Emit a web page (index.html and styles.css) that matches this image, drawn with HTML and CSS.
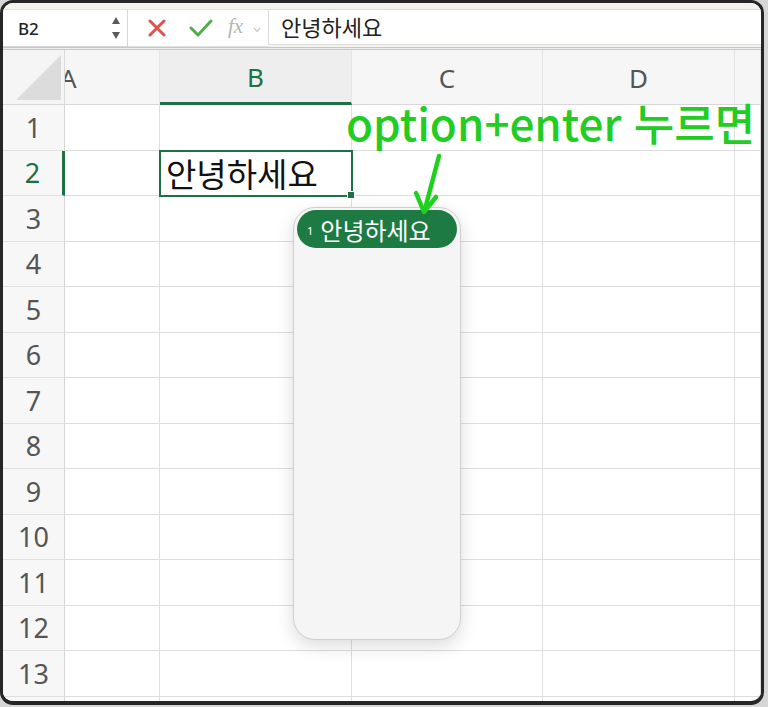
FILE: index.html
```html
<!DOCTYPE html>
<html lang="ko">
<head>
<meta charset="utf-8">
<title>Sheet</title>
<link rel="stylesheet" href="styles.css">
</head>
<body>
<div class="window">
  <div class="fbar">
    <div class="namebox">
      <span class="ref">B2</span>
      <svg class="stepper" width="10" height="24" viewBox="0 0 10 24"><path d="M5 1 L9 8 L1 8 Z" fill="#5a5a5a"/><path d="M1 16 L9 16 L5 23 Z" fill="#5a5a5a"/></svg>
    </div>
    <div class="actions">
      <svg class="ico-x" width="18" height="18" viewBox="0 0 18 18"><path d="M2 2 L16 16 M16 2 L2 16" stroke="#d9534f" stroke-width="3" stroke-linecap="round"/></svg>
      <svg class="ico-ok" width="24" height="18" viewBox="0 0 24 18"><path d="M2 9 L9 16 L22 2" stroke="#4cae4c" stroke-width="3" fill="none" stroke-linecap="round" stroke-linejoin="round"/></svg>
      <span class="fx">fx</span>
      <svg class="chev" width="8" height="6" viewBox="0 0 8 6"><path d="M1 1 L4 4.5 L7 1" stroke="#c8c8c8" stroke-width="1.2" fill="none"/></svg>
    </div>
    <div class="finput">안녕하세요</div>
  </div>
  <div class="sep"></div>
  <div class="sheet">
    <div class="corner"><svg width="46" height="46" viewBox="0 0 46 46"><path d="M0 45 L45 0 L45 45 Z" fill="#dcdcdc"/></svg></div>
    <div class="ch ch-a">A</div>
    <div class="ch ch-sel">B</div>
    <div class="ch">C</div>
    <div class="ch">D</div>
    <div class="ch"></div>

    <div class="rh">1</div><div class="c"></div><div class="c"></div><div class="c"></div><div class="c"></div><div class="c"></div>
    <div class="rh rh-sel">2</div><div class="c"></div><div class="c active">안녕하세요<span class="handle"></span></div><div class="c"></div><div class="c"></div><div class="c"></div>
    <div class="rh">3</div><div class="c"></div><div class="c"></div><div class="c"></div><div class="c"></div><div class="c"></div>
    <div class="rh">4</div><div class="c"></div><div class="c"></div><div class="c"></div><div class="c"></div><div class="c"></div>
    <div class="rh">5</div><div class="c"></div><div class="c"></div><div class="c"></div><div class="c"></div><div class="c"></div>
    <div class="rh">6</div><div class="c"></div><div class="c"></div><div class="c"></div><div class="c"></div><div class="c"></div>
    <div class="rh">7</div><div class="c"></div><div class="c"></div><div class="c"></div><div class="c"></div><div class="c"></div>
    <div class="rh">8</div><div class="c"></div><div class="c"></div><div class="c"></div><div class="c"></div><div class="c"></div>
    <div class="rh">9</div><div class="c"></div><div class="c"></div><div class="c"></div><div class="c"></div><div class="c"></div>
    <div class="rh">10</div><div class="c"></div><div class="c"></div><div class="c"></div><div class="c"></div><div class="c"></div>
    <div class="rh">11</div><div class="c"></div><div class="c"></div><div class="c"></div><div class="c"></div><div class="c"></div>
    <div class="rh">12</div><div class="c"></div><div class="c"></div><div class="c"></div><div class="c"></div><div class="c"></div>
    <div class="rh">13</div><div class="c"></div><div class="c"></div><div class="c"></div><div class="c"></div><div class="c"></div>
    <div class="rh"></div><div class="c"></div><div class="c"></div><div class="c"></div><div class="c"></div><div class="c"></div>
  </div>

  <div class="note">option+enter 누르면</div>
  <svg class="arrow" width="40" height="66" viewBox="0 0 40 66"><path d="M29 4 L15 57" stroke="#1fd11f" stroke-width="4.5" fill="none" stroke-linecap="round"/><path d="M6 41 L14 60 L26 45" stroke="#1fd11f" stroke-width="4.5" fill="none" stroke-linecap="round" stroke-linejoin="round"/></svg>

  <div class="dropdown">
    <div class="pill"><span class="num">1</span><span class="pill-text">안녕하세요</span></div>
  </div>
</div>
</body>
</html>
```

FILE: styles.css
```css
html, body {
  margin: 0;
  padding: 0;
}
body {
  background: #d6d6d6;
  width: 768px;
  height: 707px;
  overflow: hidden;
  font-family: "Noto Sans", "Noto Sans CJK KR", sans-serif;
}
.window {
  position: relative;
  box-sizing: border-box;
  width: 764px;
  height: 705px;
  border: 3px solid #262626;
  border-bottom-width: 4px;
  border-radius: 13px;
  overflow: hidden;
  background: #ffffff;
}
.fbar {
  display: flex;
  height: 44px;
  box-sizing: border-box;
  background: #f4f3ee;
  padding-top: 6px;
}
.namebox {
  width: 125px;
  display: flex;
  align-items: center;
  justify-content: space-between;
  box-sizing: border-box;
  background: #fff;
  border-top: 1px solid #e2e2e2;
  border-right: 1px solid #d6d6d6;
  border-bottom: 1px solid #d6d6d6;
  padding: 0 6px 0 15px;
}
.ref {
  font-size: 17px;
  font-weight: 500;
  color: #222;
}
.actions {
  width: 140px;
  display: flex;
  align-items: center;
  background: #fff;
  border-top: 1px solid #e2e2e2;
  border-bottom: 1px solid #e2e2e2;
  box-sizing: border-box;
  padding-left: 20px;
}
.ico-x { margin-right: 23px; }
.ico-ok { margin-right: 15px; }
.fx {
  font-family: "Liberation Serif", "DejaVu Serif", serif;
  font-style: italic;
  font-size: 21px;
  color: #b4b4b4;
  margin-right: 10px;
  margin-top: -3px;
}
.chev { margin-top: 4px; }
.finput {
  flex: 1;
  background: #fff;
  border: 1px solid #dcdcdc;
  border-right: none;
  margin-bottom: 2px;
  box-sizing: border-box;
  padding-left: 12px;
  font-family: "Noto Sans CJK KR", sans-serif;
  font-size: 22px;
  color: #222;
  line-height: 32px;
}
.sep {
  height: 3px;
  box-sizing: border-box;
  border-top: 1px solid #c8c8c8;
  border-bottom: 1px solid #c8c8c8;
  background: #eeeeee;
}
.sheet {
  display: grid;
  grid-template-columns: 62px 95px 192px 191px 192px 1fr;
  grid-template-rows: 55px repeat(14, 45.5px);
}
.corner {
  background: #f5f5f5;
  border-right: 1px solid #dadada;
  border-bottom: 1px solid #d8d8d8;
  box-sizing: border-box;
  display: flex;
  align-items: flex-end;
  justify-content: flex-end;
  padding: 0 2px 3px 0;
}
.ch {
  background: #f6f6f6;
  border-right: 1px solid #e6e6e6;
  border-bottom: 1px solid #d8d8d8;
  box-sizing: border-box;
  display: flex;
  align-items: center;
  justify-content: center;
  font-size: 26px;
  color: #555;
  overflow: hidden;
  padding-top: 2px;
}
.ch-a {
  justify-content: flex-start;
  text-indent: -5px;
}
.ch-sel {
  background: #eeeeee;
  color: #1e7145;
  border-bottom: 3px solid #1e7145;
}
.rh {
  background: #f7f7f7;
  border-right: 1px solid #d6d6d6;
  border-bottom: 1px solid #e0e0e0;
  box-sizing: border-box;
  display: flex;
  align-items: center;
  justify-content: center;
  font-size: 27px;
  color: #555;
}
.rh-sel {
  color: #1e7145;
  border-right: 3px solid #1e7145;
}
.c {
  border-right: 1px solid #dedede;
  border-bottom: 1px solid #dedede;
  box-sizing: border-box;
}
.active {
  position: relative;
  outline: 2px solid #1e7145;
  outline-offset: -1px;
  font-family: "Noto Sans CJK KR", sans-serif;
  font-size: 33px;
  color: #111;
  display: flex;
  align-items: center;
  padding-left: 6px;
  z-index: 1;
}
.handle {
  position: absolute;
  right: -4px;
  bottom: -4px;
  width: 6px;
  height: 6px;
  background: #1e7145;
  border: 1px solid #fff;
}
.note {
  position: absolute;
  left: 343px;
  top: 102px;
  font-family: "Noto Sans CJK KR", "Noto Sans", sans-serif;
  font-weight: 500;
  font-size: 44px;
  line-height: 34px;
  color: #22cc22;
  white-space: nowrap;
  z-index: 3;
}
.arrow {
  position: absolute;
  left: 407px;
  top: 149px;
  z-index: 4;
}
.dropdown {
  position: absolute;
  left: 290px;
  top: 204px;
  width: 168px;
  height: 433px;
  box-sizing: border-box;
  background: #f5f5f5;
  border: 1px solid #cfcfcf;
  border-radius: 22px;
  box-shadow: 0 6px 18px rgba(0, 0, 0, 0.14);
  padding: 2px 3px;
  z-index: 2;
}
.pill {
  height: 38px;
  border-radius: 19px;
  background: #1d7a42;
  display: flex;
  align-items: center;
  padding-left: 10px;
  color: #fff;
}
.num {
  font-size: 11px;
  margin-right: 7px;
  margin-top: 2px;
}
.pill-text {
  font-family: "Noto Sans CJK KR", sans-serif;
  font-size: 24px;
}
```
